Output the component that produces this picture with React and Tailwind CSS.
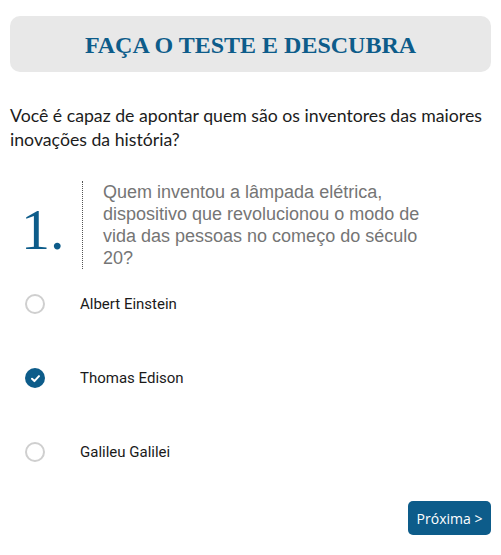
import React, { useState } from 'react';

const options = ['Albert Einstein', 'Thomas Edison', 'Galileu Galilei'];

function Radio({ checked }) {
  if (checked) {
    return (
      <span className="flex h-5 w-5 items-center justify-center rounded-full bg-[#0d5c8a]">
        <svg viewBox="0 0 12 12" className="h-[11px] w-[11px]" fill="none">
          <path d="M2.2 6.3 4.8 8.8 9.8 3.4" stroke="#fff" strokeWidth="2.2" strokeLinecap="round" strokeLinejoin="round" />
        </svg>
      </span>
    );
  }
  return <span className="block h-5 w-5 rounded-full border-2 border-[#cfcfcf] bg-white" />;
}

export default function App() {
  const [selected, setSelected] = useState(1);

  return (
    <div className="min-h-[555px] w-[501px] bg-white px-[10px] pt-4">
      {/* Header */}
      <div className="flex h-[56px] items-center justify-center rounded-[10px] bg-[#e8e8e8]">
        <h1 className="pt-0.5 text-[24px] font-bold text-[#0d5c8a] [font-family:'Liberation_Serif',serif]">
          FAÇA O TESTE E DESCUBRA
        </h1>
      </div>

      <p className="mt-[32px] text-[17.7px] leading-[24px] text-[#1c1c1c] [font-family:Lato,sans-serif]">
        Você é capaz de apontar quem são os inventores das maiores inovações da história?
      </p>

      {/* Question */}
      <div className="mt-[29px] flex">
        <div className="flex w-[72px] items-center pl-[11px] pt-[9px]">
          <span className="text-[58px] leading-none text-[#0d5c8a] [font-family:'Liberation_Serif',serif]">
            1.
          </span>
        </div>
        <div className="w-[350px] border-l border-dotted border-[#555] pl-5">
          <p className="text-[18px] leading-[22px] text-[#757575] [font-family:'Liberation_Sans',Arial,sans-serif]">
            Quem inventou a lâmpada elétrica, dispositivo que revolucionou o modo de vida das pessoas no começo do século 20?
          </p>
        </div>
      </div>

      {/* Options */}
      <div className="mt-[25px] flex flex-col gap-[54px]">
        {options.map((opt, i) => (
          <label
            key={opt}
            onClick={() => setSelected(i)}
            className="flex h-5 cursor-pointer items-center"
          >
            <span className="ml-[15px] w-[55px]">
              <Radio checked={selected === i} />
            </span>
            <span className="text-[15px] text-[#1a1a1a] [font-family:Roboto,sans-serif]">{opt}</span>
          </label>
        ))}
      </div>

      <div className="mt-[39px] flex justify-end">
        <button className="h-[34px] w-[83px] rounded-[5px] bg-[#0d5c8a] text-[14px] text-white [font-family:'Open_Sans',sans-serif]">
          Próxima &gt;
        </button>
      </div>
    </div>
  );
}
